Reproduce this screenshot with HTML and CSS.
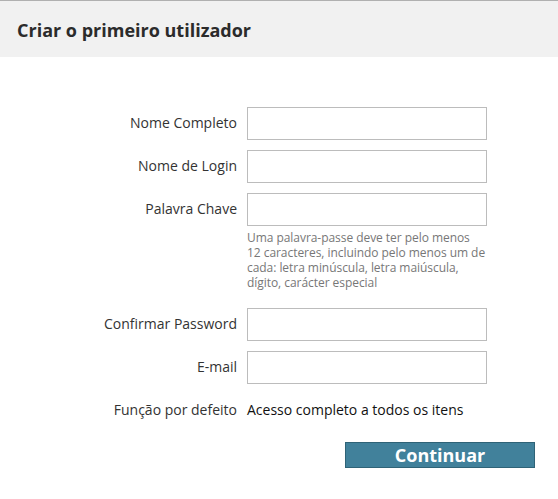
FILE: index.html
```html
<!DOCTYPE html>
<html lang="pt">
<head>
<meta charset="utf-8">
<title>Criar o primeiro utilizador</title>
<link rel="stylesheet" href="styles.css">
</head>
<body>
<div class="header">
  <h1 class="title">Criar o primeiro utilizador</h1>
</div>
<form class="form">
  <div class="row">
    <label class="lbl" for="f1">Nome Completo</label>
    <div class="field"><input class="inp" id="f1" type="text"></div>
  </div>
  <div class="row">
    <label class="lbl" for="f2">Nome de Login</label>
    <div class="field"><input class="inp" id="f2" type="text"></div>
  </div>
  <div class="row row-pw">
    <label class="lbl" for="f3">Palavra Chave</label>
    <div class="field">
      <input class="inp" id="f3" type="password">
      <p class="hint">Uma palavra-passe deve ter pelo menos<br>12 caracteres, incluindo pelo menos um de<br>cada: letra minúscula, letra maiúscula,<br>dígito, carácter especial</p>
    </div>
  </div>
  <div class="row">
    <label class="lbl" for="f4">Confirmar Password</label>
    <div class="field"><input class="inp" id="f4" type="password"></div>
  </div>
  <div class="row">
    <label class="lbl" for="f5">E-mail</label>
    <div class="field"><input class="inp" id="f5" type="text"></div>
  </div>
  <div class="row row-role">
    <span class="lbl lbl-text">Função por defeito</span>
    <span class="value">Acesso completo a todos os itens</span>
  </div>
  <div class="actions">
    <button class="btn" type="button">Continuar</button>
  </div>
</form>
</body>
</html>
```

FILE: styles.css
```css
* { box-sizing: border-box; }
html, body {
  margin: 0;
  padding: 0;
  background: #fff;
  font-family: "Open Sans", "Noto Sans", sans-serif;
  color: #333;
}
.header {
  border-top: 1px solid #b0b0b0;
  background: #f1f1f1;
  height: 57px;
  padding-left: 17px;
  display: flex;
  align-items: center;
}
.title {
  margin: 0;
  font-size: 18px;
  font-weight: 700;
  color: #2b2b2b;
  line-height: 24px;
  padding-top: 1px;
}
.form {
  padding-top: 50px;
  display: flex;
  flex-direction: column;
}
.row {
  display: flex;
  align-items: flex-start;
  margin-bottom: 10px;
}
.row-pw { margin-bottom: 18px; }
.lbl {
  width: 237px;
  text-align: right;
  font-size: 14px;
  line-height: 32px;
  color: #333;
}
.field {
  width: 240px;
  margin-left: 10px;
}
.inp {
  display: block;
  width: 240px;
  height: 33px;
  margin: 0;
  border: 1px solid #bcbcbc;
  border-radius: 0;
  background: #fff;
  padding: 4px 6px;
  font-family: inherit;
  font-size: 14px;
  outline: none;
}
.hint {
  margin: 4px 0 0;
  font-size: 12px;
  line-height: 15px;
  letter-spacing: -0.05px;
  white-space: nowrap;
  color: #777;
}
.row-role {
  margin-top: 6px;
  margin-bottom: 0;
  align-items: baseline;
}
.lbl-text { line-height: 19px; }
.value {
  margin-left: 10px;
  font-size: 14px;
  line-height: 19px;
  color: #111;
}
.actions {
  display: flex;
  justify-content: flex-end;
  padding-right: 23px;
  margin-top: 23px;
}
.btn {
  width: 190px;
  height: 26px;
  margin: 0;
  padding: 0;
  border: 1px solid #2f6377;
  border-radius: 0;
  background: #41819b;
  color: #fff;
  font-family: inherit;
  font-size: 18px;
  font-weight: 700;
  line-height: 24px;
  cursor: pointer;
}
```
